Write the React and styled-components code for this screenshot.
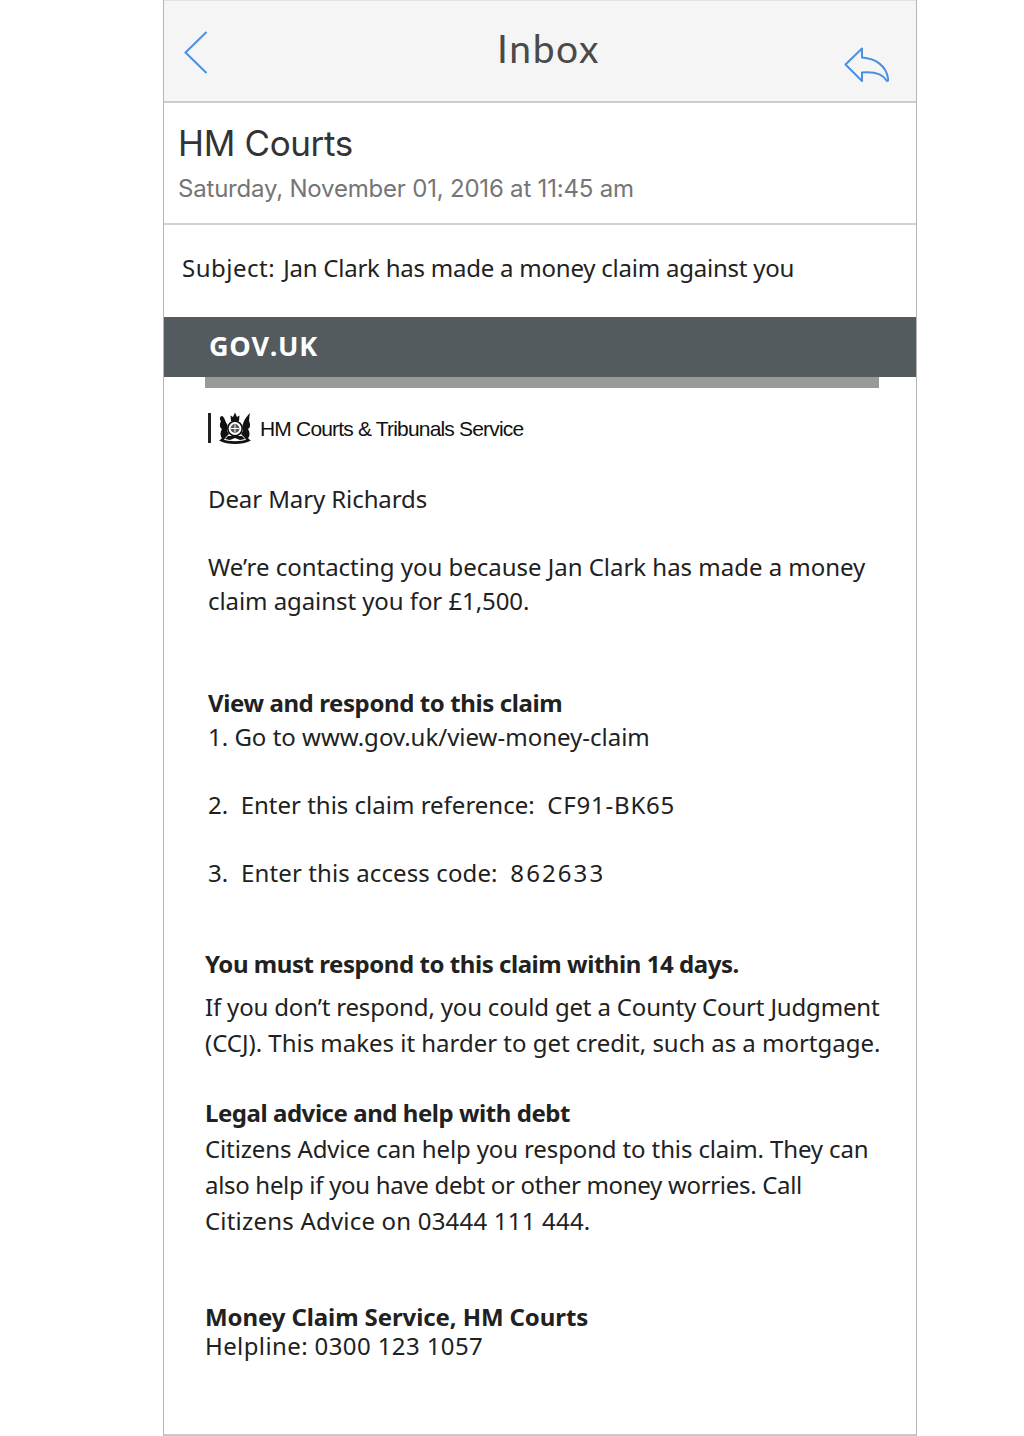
import React from "react";
import styled, { createGlobalStyle } from "styled-components";

const GlobalStyle = createGlobalStyle`
  html, body {
    margin: 0;
    padding: 0;
    background: #fff;
  }
`;

const Phone = styled.div`
  box-sizing: border-box;
  width: 754px;
  height: 1436px;
  margin-left: 163px;
  border-left: 1px solid #b5b5b5;
  border-right: 1px solid #b5b5b5;
  border-bottom: 2px solid #c9c9c9;
  display: flex;
  flex-direction: column;
  overflow: hidden;
  color: #212121;
`;

const NavBar = styled.header`
  box-sizing: border-box;
  height: 103px;
  padding: 0 27px 0 20px;
  background: #f5f5f5;
  border-top: 1px solid #e2e2e2;
  border-bottom: 2px solid #cdcdcd;
  display: flex;
  justify-content: space-between;
  position: relative;
`;

const NavTitle = styled.h1`
  position: absolute;
  left: 0;
  right: 0;
  top: 23px;
  margin: 0 0 0 17px;
  text-align: center;
  font: 400 39px/48px "Lato", sans-serif;
  letter-spacing: 1.6px;
  color: #4a4a4a;
`;

const BackIcon = styled.svg`
  width: 24px;
  height: 45px;
  margin-top: 29px;
`;

const ReplyIcon = styled.svg`
  width: 46px;
  height: 36px;
  margin-top: 46px;
`;

const Meta = styled.section`
  box-sizing: border-box;
  height: 122px;
  padding: 19px 14px 0;
  border-bottom: 2px solid #d2d2d2;
`;

const Sender = styled.div`
  font: 400 35px/42px "Inter", sans-serif;
  letter-spacing: -0.35px;
  color: #333;
`;

const SentAt = styled.div`
  margin-top: 10px;
  font: 400 24px/30px "Inter", sans-serif;
  letter-spacing: -0.2px;
  color: #757575;
`;

const SubjectRow = styled.div`
  box-sizing: border-box;
  height: 92px;
  padding: 26px 18px 0;
  display: flex;
  gap: 8px;
  font: 400 24px/34px "Noto Sans", sans-serif;
  color: #222;
`;

const SubjectLabel = styled.span`
  letter-spacing: 0.5px;
`;

const SubjectText = styled.span`
  letter-spacing: -0.23px;
`;

const GovBar = styled.div`
  box-sizing: border-box;
  height: 60px;
  padding-left: 45px;
  background: #545b5f;
  color: #fff;
  font: 700 27px/58px "Open Sans", sans-serif;
  letter-spacing: 0.7px;
`;

const GovRule = styled.div`
  height: 11px;
  margin: 0 37px 0 41px;
  background: #999;
`;

const Body = styled.main`
  padding-left: 44px;
`;

const Organisation = styled.div`
  height: 30px;
  margin-top: 25px;
  display: flex;
  align-items: center;
`;

const OrgDivider = styled.span`
  width: 3px;
  height: 30px;
  flex: none;
  background: #222;
`;

const Crest = styled.svg`
  width: 36px;
  height: 32px;
  margin: 0 7px 0 6px;
`;

const OrgName = styled.span`
  margin-top: 2px;
  font: 400 21px/30px "Liberation Sans", sans-serif;
  letter-spacing: -0.82px;
  color: #111;
`;

const Line = styled.div`
  height: ${(p) => p.$height || 34}px;
  margin-top: ${(p) => p.$top || 0}px;
  margin-left: ${(p) => p.$shift || 0}px;
  font: ${(p) => (p.$bold ? 700 : 400)} 24px/${(p) => p.$height || 34}px "Noto Sans", sans-serif;
  letter-spacing: ${(p) => p.$spacing || 0}px;
  white-space: pre;
`;

const Code = styled.span`
  letter-spacing: ${(p) => p.$spacing}px;
`;

const BACK_PATH = "M22.5 2 L1.5 22.5 L22.5 43";
const REPLY_PATH =
  "M19 1.5 L2.5 17.5 L19 34 L19 25.5 C31 24.5 40 27 44 34 C45.5 34 45.5 33 45 31 C43 19 33 11.5 19 10.5 Z";

function RoyalCrest() {
  return (
    <Crest viewBox="0 0 36 32">
      <g fill="#111">
        {/* crown and helm */}
        <path d="M14 9 L13.5 3.5 L16 5 L18 0.5 L20 5 L22.5 3.5 L22 9 Z" />
        {/* lion */}
        <path d="M10 12 C8 10 8 5 5 4 C3 4 2 7 4 9 C2 13 3 16 5 17 C3 20 3 24 5 26 L2 29 L6 29 L9 25 L12 22 L10 19 C11 16 11 14 10 12 Z" />
        {/* unicorn */}
        <path d="M26 12 C27 9 28 6 33 1 C32 5 32.5 7 32 9 C34 13 33 16 31 17 C33 20 33 24 31 26 L34 29 L30 29 L27 25 L24 22 L26 19 C25 16 25 14 26 12 Z" />
        {/* motto scroll */}
        <path d="M3 29 C10 33 26 33 33 29 L31 27 C24 30 12 30 5 27 Z" />
        <path d="M11 24 L8 27 L13 28 L18 26 L23 28 L28 27 L25 24 Z" />
      </g>
      <circle cx="18" cy="16.5" r="7.2" fill="#fff" stroke="#111" strokeWidth="1.6" />
      <circle cx="18" cy="16.5" r="4.4" fill="#555" />
      <path d="M18 12.5 V20.5 M14 16.5 H22" stroke="#fff" strokeWidth="1" />
    </Crest>
  );
}

export default function App() {
  return (
    <>
      <GlobalStyle />
      <Phone>
        <NavBar>
          <BackIcon viewBox="0 0 24 45" fill="none" stroke="#4a90e2" strokeWidth="2">
            <path d={BACK_PATH} />
          </BackIcon>
          <NavTitle>Inbox</NavTitle>
          <ReplyIcon viewBox="0 0 46 36" fill="none" stroke="#4a90e2" strokeWidth="2" strokeLinejoin="round">
            <path d={REPLY_PATH} />
          </ReplyIcon>
        </NavBar>
        <Meta>
          <Sender>HM Courts</Sender>
          <SentAt>Saturday, November 01, 2016 at 11:45 am</SentAt>
        </Meta>
        <SubjectRow>
          <SubjectLabel>Subject:</SubjectLabel>
          <SubjectText>Jan Clark has made a money claim against you</SubjectText>
        </SubjectRow>
        <GovBar>GOV.UK</GovBar>
        <GovRule />
        <Body>
          <Organisation>
            <OrgDivider />
            <RoyalCrest />
            <OrgName>HM Courts &amp; Tribunals Service</OrgName>
          </Organisation>
          <Line $top={39} $spacing={-0.1}>Dear Mary Richards</Line>
          <Line $top={34} $spacing={-0.02}>We’re contacting you because Jan Clark has made a money</Line>
          <Line $spacing={-0.07}>claim against you for £1,500.</Line>
          <Line $top={68} $bold $spacing={-0.4}>View and respond to this claim</Line>
          <Line>1. Go to www.gov.uk/view-money-claim</Line>
          <Line $top={34}>2.  Enter this claim reference:  <Code $spacing={0.8}>CF91-BK65</Code></Line>
          <Line $top={34} $spacing={0.11}>3.  Enter this access code:  <Code $spacing={2.1}>862633</Code></Line>
          <Line $top={57} $shift={-3} $bold $spacing={-0.45}>You must respond to this claim within 14 days.</Line>
          <Line $top={8} $height={36} $shift={-3} $spacing={-0.17}>If you don’t respond, you could get a County Court Judgment</Line>
          <Line $height={36} $shift={-3} $spacing={-0.02}>(CCJ). This makes it harder to get credit, such as a mortgage.</Line>
          <Line $top={34} $height={36} $shift={-3} $bold $spacing={-0.45}>Legal advice and help with debt</Line>
          <Line $height={36} $shift={-3} $spacing={-0.13}>Citizens Advice can help you respond to this claim. They can</Line>
          <Line $height={36} $shift={-3} $spacing={-0.31}>also help if you have debt or other money worries. Call</Line>
          <Line $height={36} $shift={-3} $spacing={0.2}>Citizens Advice on 03444 111 444.</Line>
          <Line $top={64} $height={28} $shift={-3} $bold $spacing={-0.1}>Money Claim Service, HM Courts</Line>
          <Line $height={30} $shift={-3} $spacing={0.39}>Helpline: 0300 123 1057</Line>
        </Body>
      </Phone>
    </>
  );
}
